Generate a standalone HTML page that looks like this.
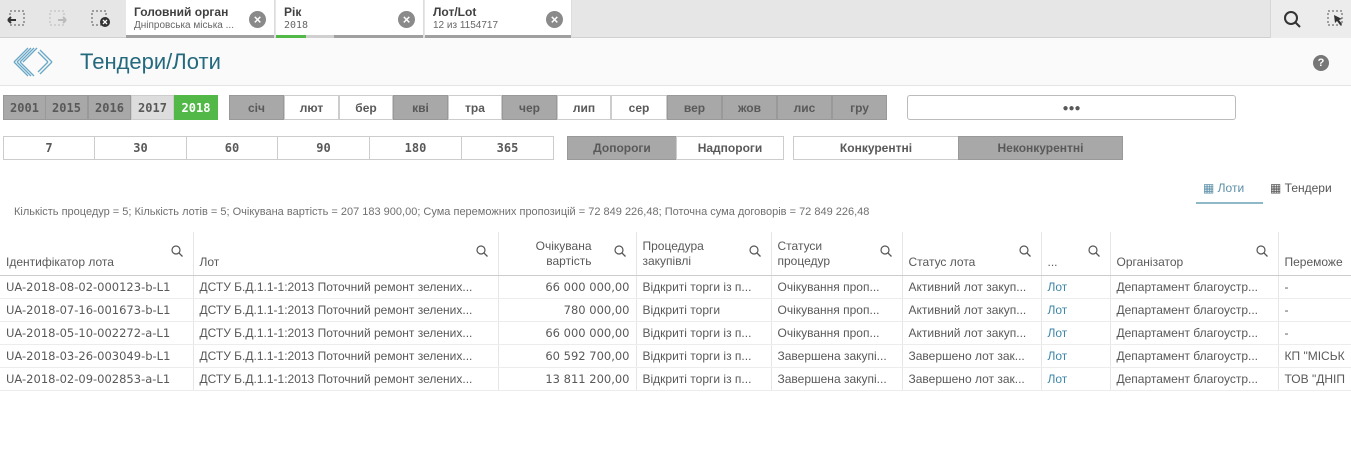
<!DOCTYPE html>
<html><head><meta charset="utf-8">
<style>
*{box-sizing:border-box;margin:0;padding:0}
body{width:1351px;height:452px;overflow:hidden;background:#fff;font-family:"Liberation Sans","DejaVu Sans",sans-serif;color:#595959;position:relative}
.abs{position:absolute}
.top{left:0;top:0;width:1351px;height:38px;background:#e6e6e6;border-bottom:1px solid #d0d0d0}
.tab{top:0;height:38px;background:#fff;border-right:1px solid #ddd}
.tab .t1{position:absolute;left:8px;top:5px;font-size:12px;font-weight:bold;color:#404040}
.tab .t2{position:absolute;left:8px;top:20px;font-size:10px;color:#666}
.tab .bar{position:absolute;left:0;bottom:0;height:3px;width:100%;background:#a0a0a0}
.x{position:absolute;right:8px;top:11px;width:17px;height:17px;border-radius:50%;background:#8a8a8a;color:#fff;font-size:13px;line-height:17px;text-align:center;font-weight:bold}
.hdr{left:0;top:38px;width:1351px;height:48px;background:#f9faf9;border-bottom:1px solid #e4e4e4}
.btn{position:absolute;height:25px;font-size:12px;font-weight:bold;text-align:center;line-height:25px;color:#595959;border:1px solid #ccc;background:#fff}
.g{background:#a8a8a8;border-color:#999}
.mono{font-family:"DejaVu Sans Mono","Liberation Mono",monospace;font-size:12px}
table{border-collapse:collapse;position:absolute;left:0;top:232px;font-size:12px;table-layout:fixed;width:1358px}
td,th{border-right:1px solid #e6e6e6;border-bottom:1px solid #ececec;padding:0 6px;white-space:nowrap;overflow:hidden;height:23px;color:#595959;font-weight:normal}
th{height:43px;text-align:left;vertical-align:bottom;padding-bottom:6px;position:relative;border-bottom:1px solid #ccc}
th svg{position:absolute;right:10px;top:13px}
.r{text-align:right}
.lnk{color:#3d86a8}
.num{font-family:"DejaVu Sans","Liberation Sans",sans-serif;font-size:11.5px}
</style></head><body>
<svg width="0" height="0" style="position:absolute"><defs><symbol id="q" viewBox="0 0 12 12"><circle cx="5" cy="5" r="4" fill="none" stroke="#555" stroke-width="1.2"/><path d="M8 8l3.5 3.5" stroke="#555" stroke-width="1.3"/></symbol></defs></svg>
<div class="abs top"></div>
<svg class="abs" style="left:6px;top:10px" width="22" height="18"><rect x="4" y="1" width="14" height="14" fill="none" stroke="#555" stroke-dasharray="2,2"/><path d="M2 10h8M2 10l3-3M2 10l3 3" stroke="#333" stroke-width="2" fill="none"/></svg>
<svg class="abs" style="left:48px;top:10px" width="22" height="18"><rect x="2" y="1" width="14" height="14" fill="none" stroke="#bbb" stroke-dasharray="2,2"/><path d="M10 10h8M18 10l-3-3M18 10l-3 3" stroke="#bbb" stroke-width="2" fill="none"/></svg>
<svg class="abs" style="left:90px;top:10px" width="22" height="18"><rect x="2" y="1" width="14" height="14" fill="none" stroke="#555" stroke-dasharray="2,2"/><circle cx="15" cy="12" r="5" fill="#333"/><path d="M13 10l4 4M17 10l-4 4" stroke="#fff" stroke-width="1.3"/></svg>
<div class="abs tab" style="left:126px;width:149px"><div class="t1">Головний орган</div><div class="t2">Дніпровська міська ...</div><div class="x">×</div><div class="bar"></div></div>
<div class="abs tab" style="left:276px;width:148px"><div class="t1">Рік</div><div class="t2 mono" style="font-size:10px">2018</div><div class="x">×</div><div class="bar" style="background:linear-gradient(90deg,#52b948 0 30px,#d0d0d0 30px 58px,#a0a0a0 58px)"></div></div>
<div class="abs tab" style="left:425px;width:147px"><div class="t1">Лот/Lot</div><div class="t2">12 из 1154717</div><div class="x">×</div><div class="bar"></div></div>
<div class="abs" style="left:1270px;top:0;width:81px;height:38px;background:#ececec;border-left:1px solid #d6d6d6"></div>
<svg class="abs" style="left:1283px;top:10px" width="20" height="20"><circle cx="8" cy="8" r="6" fill="none" stroke="#333" stroke-width="2"/><path d="M12 12l5 5" stroke="#333" stroke-width="2"/></svg>
<svg class="abs" style="left:1327px;top:10px" width="20" height="20"><rect x="1" y="1" width="14" height="14" fill="none" stroke="#555" stroke-dasharray="2,2"/><path d="M7 5l8 4-3 1 3 4-2 1-3-4-2 2z" fill="#333"/></svg>
<div class="abs hdr"></div>
<svg class="abs" style="left:10px;top:44px" width="46" height="36"><g stroke="#6aa8c8" stroke-width="1.3" fill="none"><path d="M4 18l14-14M7 18l14-14M10 18l14-14M13 18l14-14"/><path d="M4 18l14 14M7 18l14 14M10 18l14 14"/><path d="M42 18l-12-12M42 18l-12 12M38 18l-10-10M38 18l-10 10"/></g></svg>
<div class="abs" style="left:80px;top:49px;font-size:22px;color:#24697e">Тендери/Лоти</div>
<div class="abs" style="left:1313px;top:55px;width:16px;height:16px;border-radius:50%;background:#777;color:#fff;font-size:11px;font-weight:bold;text-align:center;line-height:16px">?</div>
<div class="btn g mono" style="left:3px;top:95px;width:43px;font-weight:bold">2001</div>
<div class="btn g mono" style="left:45px;top:95px;width:43px;font-weight:bold">2015</div>
<div class="btn g mono" style="left:88px;top:95px;width:43px;font-weight:bold">2016</div>
<div class="btn mono" style="left:131px;top:95px;width:43px;background:#ddd;font-weight:bold">2017</div>
<div class="btn mono" style="left:174px;top:95px;width:44px;background:#52b948;border-color:#52b948;color:#fff;font-weight:bold">2018</div>
<div class="btn g" style="left:229px;top:95px;width:55px">січ</div>
<div class="btn" style="left:284px;top:95px;width:55px">лют</div>
<div class="btn" style="left:339px;top:95px;width:54px">бер</div>
<div class="btn g" style="left:393px;top:95px;width:55px">кві</div>
<div class="btn" style="left:448px;top:95px;width:54px">тра</div>
<div class="btn g" style="left:502px;top:95px;width:55px">чер</div>
<div class="btn" style="left:557px;top:95px;width:54px">лип</div>
<div class="btn" style="left:611px;top:95px;width:56px">сер</div>
<div class="btn g" style="left:667px;top:95px;width:55px">вер</div>
<div class="btn g" style="left:722px;top:95px;width:55px">жов</div>
<div class="btn g" style="left:777px;top:95px;width:55px">лис</div>
<div class="btn g" style="left:832px;top:95px;width:55px">гру</div>
<div class="btn" style="left:907px;top:95px;width:329px;border-radius:3px;border-color:#bbb;font-size:10px">●●●</div>
<div class="btn mono" style="left:3px;top:136px;width:92px;height:24px;line-height:23px;font-weight:bold">7</div>
<div class="btn mono" style="left:94px;top:136px;width:93px;height:24px;line-height:23px;font-weight:bold">30</div>
<div class="btn mono" style="left:186px;top:136px;width:92px;height:24px;line-height:23px;font-weight:bold">60</div>
<div class="btn mono" style="left:277px;top:136px;width:93px;height:24px;line-height:23px;font-weight:bold">90</div>
<div class="btn mono" style="left:369px;top:136px;width:93px;height:24px;line-height:23px;font-weight:bold">180</div>
<div class="btn mono" style="left:461px;top:136px;width:93px;height:24px;line-height:23px;font-weight:bold">365</div>
<div class="btn g" style="left:567px;top:136px;width:110px;height:24px;line-height:23px">Допороги</div>
<div class="btn" style="left:676px;top:136px;width:108px;height:24px;line-height:23px">Надпороги</div>
<div class="btn" style="left:793px;top:136px;width:166px;height:24px;line-height:23px">Конкурентні</div>
<div class="btn g" style="left:958px;top:136px;width:165px;height:24px;line-height:23px">Неконкурентні</div>
<div class="abs" style="left:1203px;top:181px;font-size:12px;color:#5c8fa8">▦ Лоти</div>
<div class="abs" style="left:1196px;top:202px;width:67px;height:2px;background:#8fb9c9"></div>
<div class="abs" style="left:1270px;top:181px;font-size:12px;color:#555">▦ Тендери</div>
<div class="abs" style="left:14px;top:206px;font-size:11px;color:#707070">Кількість процедур = 5; Кількість лотів = 5; Очікувана вартість = 207 183 900,00; Сума переможних пропозицій = 72 849 226,48; Поточна сума договорів = 72 849 226,48</div>
<table>
<colgroup><col style="width:193px"><col style="width:305px"><col style="width:138px"><col style="width:135px"><col style="width:131px"><col style="width:139px"><col style="width:69px"><col style="width:168px"><col style="width:80px"></colgroup>
<tr><th>Ідентифікатор лота<svg width="12" height="12"><use href="#q"/></svg></th><th>Лот<svg width="12" height="12"><use href="#q"/></svg></th><th class="r" style="padding-right:44px;line-height:15px">Очікувана<br>вартість<svg width="12" height="12"><use href="#q"/></svg></th><th style="line-height:15px">Процедура<br>закупівлі<svg width="12" height="12"><use href="#q"/></svg></th><th style="line-height:15px">Статуси<br>процедур<svg width="12" height="12"><use href="#q"/></svg></th><th>Статус лота<svg width="12" height="12"><use href="#q"/></svg></th><th>...<svg width="12" height="12"><use href="#q"/></svg></th><th>Організатор<svg width="12" height="12"><use href="#q"/></svg></th><th>Переможе</th></tr>
<tr><td class="num">UA-2018-08-02-000123-b-L1</td><td>ДСТУ Б.Д.1.1-1:2013 Поточний ремонт зелених...</td><td class="r num">66 000 000,00</td><td>Відкриті торги із п...</td><td>Очікування проп...</td><td>Активний лот закуп...</td><td class="lnk">Лот</td><td>Департамент благоустр...</td><td>-</td></tr>
<tr><td class="num">UA-2018-07-16-001673-b-L1</td><td>ДСТУ Б.Д.1.1-1:2013 Поточний ремонт зелених...</td><td class="r num">780 000,00</td><td>Відкриті торги</td><td>Очікування проп...</td><td>Активний лот закуп...</td><td class="lnk">Лот</td><td>Департамент благоустр...</td><td>-</td></tr>
<tr><td class="num">UA-2018-05-10-002272-a-L1</td><td>ДСТУ Б.Д.1.1-1:2013 Поточний ремонт зелених...</td><td class="r num">66 000 000,00</td><td>Відкриті торги із п...</td><td>Очікування проп...</td><td>Активний лот закуп...</td><td class="lnk">Лот</td><td>Департамент благоустр...</td><td>-</td></tr>
<tr><td class="num">UA-2018-03-26-003049-b-L1</td><td>ДСТУ Б.Д.1.1-1:2013 Поточний ремонт зелених...</td><td class="r num">60 592 700,00</td><td>Відкриті торги із п...</td><td>Завершена закупі...</td><td>Завершено лот зак...</td><td class="lnk">Лот</td><td>Департамент благоустр...</td><td>КП "МІСЬК</td></tr>
<tr><td class="num">UA-2018-02-09-002853-a-L1</td><td>ДСТУ Б.Д.1.1-1:2013 Поточний ремонт зелених...</td><td class="r num">13 811 200,00</td><td>Відкриті торги із п...</td><td>Завершена закупі...</td><td>Завершено лот зак...</td><td class="lnk">Лот</td><td>Департамент благоустр...</td><td>ТОВ "ДНІП</td></tr>
</table>
</body></html>
